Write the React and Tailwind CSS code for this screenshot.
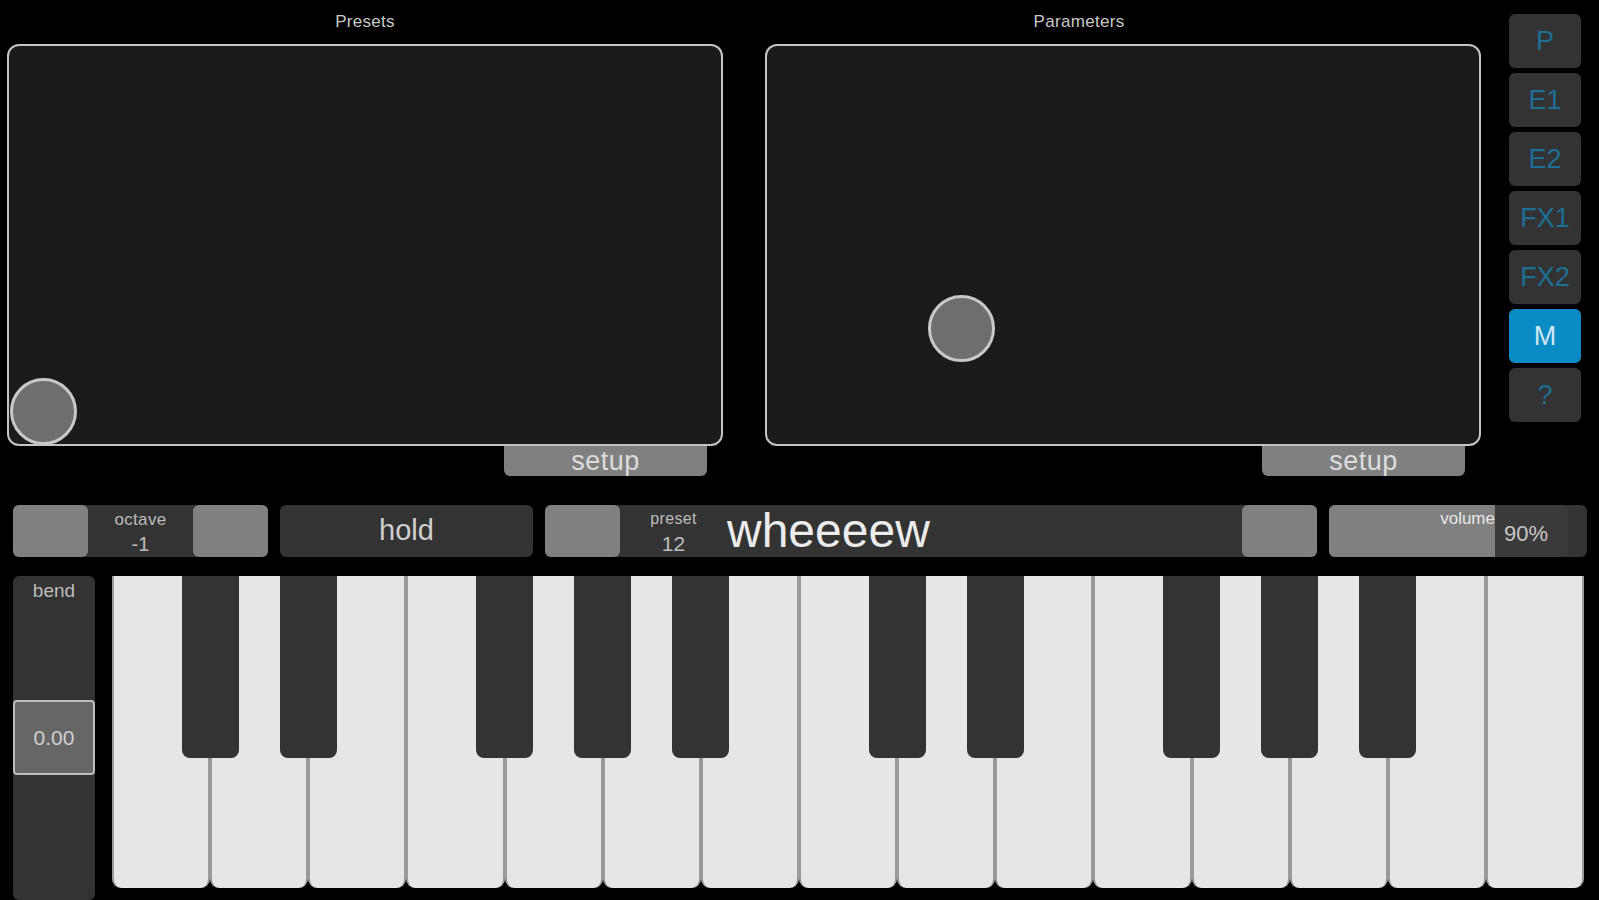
import React from "react";

const font = { fontFamily: '"Liberation Sans", Arial, sans-serif' };

function Pad({ title, knob, titleShift }) {
  return (
    <div className="flex w-[716px] flex-col">
      <div
        className={
          titleShift
            ? "flex h-[44px] items-center justify-center pr-[88px] text-[17px] tracking-[0.3px] text-[#c8c8c8]"
            : "flex h-[44px] items-center justify-center text-[17px] tracking-[0.3px] text-[#c8c8c8]"
        }
      >
        {title}
      </div>
      <div className="relative h-[402px] rounded-[12px] border-2 border-[#c4c4c4] bg-[#1b1b1b]">
        <div
          className="absolute h-[67px] w-[67px] rounded-full border-[3px] border-[#c8c8c8] bg-[#6e6e6e]"
          style={{ left: knob[0], top: knob[1] }}
        />
      </div>
      <div className="flex justify-end pr-[16px]">
        <div className="flex h-[30px] w-[203px] items-center justify-center rounded-b-[6px] bg-[#808080] text-[27px] leading-none tracking-[0.5px] text-[#dcdcdc]">
          setup
        </div>
      </div>
    </div>
  );
}

function SideButton({ label, active }) {
  return (
    <div
      className={
        active
          ? "flex h-[54px] w-[72px] items-center justify-center rounded-[6px] bg-[#0a8bc4] text-[27px] text-[#cfe6f2]"
          : "flex h-[54px] w-[72px] items-center justify-center rounded-[6px] bg-[#333333] text-[27px] text-[#1d6f96]"
      }
    >
      {label}
    </div>
  );
}

function GrayBtn() {
  return <div className="h-full w-[75px] shrink-0 rounded-[6px] bg-[#808080]" />;
}

const BLACK_AT = [1, 2, 4, 5, 6, 8, 9, 11, 12, 13];

function Keyboard() {
  return (
    <div className="relative flex h-[312px] w-[1472px]">
      {Array.from({ length: 15 }).map((_, i) => (
        <div
          key={i}
          className="h-full flex-1 rounded-b-[9px] border-x-2 border-[#9a9a9a] bg-[#e6e6e6]"
        />
      ))}
      {BLACK_AT.map((b) => (
        <div
          key={b}
          className="absolute top-0 h-[182px] w-[57px] rounded-b-[8px] bg-[#333333]"
          style={{ left: `calc(${(b * 100) / 15}% - 28.5px)` }}
        />
      ))}
    </div>
  );
}

export default function App() {
  return (
    <div className="h-[900px] w-[1599px] overflow-hidden bg-black" style={font}>
      <div className="flex h-[505px] pl-[7px]">
        <Pad title="Presets" knob={[1, 332]} />
        <div className="w-[42px]" />
        <Pad title="Parameters" knob={[161, 249]} titleShift />
        <div className="flex flex-col gap-[5px] pl-[28px] pt-[14px]">
          <SideButton label="P" />
          <SideButton label="E1" />
          <SideButton label="E2" />
          <SideButton label="FX1" />
          <SideButton label="FX2" />
          <SideButton label="M" active />
          <SideButton label="?" />
        </div>
      </div>

      <div className="flex h-[52px] gap-[12px] pl-[13px]">
        <div className="flex w-[255px] rounded-[6px] bg-[#333333]">
          <GrayBtn />
          <div className="flex flex-1 flex-col items-center justify-center pt-[3px] leading-none text-[#bdbdbd]">
            <span className="text-[17px] tracking-[0.3px]">octave</span>
            <span className="mt-[6px] text-[20px]">-1</span>
          </div>
          <GrayBtn />
        </div>
        <div className="flex w-[253px] items-center justify-center rounded-[6px] bg-[#333333] text-[29px] text-[#cfcfcf]">
          hold
        </div>
        <div className="flex w-[772px] items-center rounded-[6px] bg-[#333333]">
          <GrayBtn />
          <div className="flex w-[107px] flex-col items-center justify-center pt-[3px] leading-none text-[#bdbdbd]">
            <span className="text-[16px] tracking-[0.3px]">preset</span>
            <span className="mt-[6px] text-[21px]">12</span>
          </div>
          <div className="flex-1 text-[48px] leading-none text-[#ececec]">wheeeew</div>
          <GrayBtn />
        </div>
        <div className="flex w-[258px] rounded-[6px] bg-[#333333] pr-[19px]">
          <div className="flex flex-1 rounded-[6px] bg-[#3a3a3a]">
            <div className="flex w-[166px] justify-end rounded-l-[6px] bg-[#808080] pt-[5px] text-[17px] leading-none text-[#e8e8e8]">
              volume
            </div>
            <div className="flex flex-1 items-center pl-[9px] pt-[4px] text-[22px] text-[#c8c8c8]">
              90%
            </div>
          </div>
        </div>
      </div>

      <div className="flex gap-[17px] pl-[13px] pt-[19px]">
        <div className="flex h-[324px] w-[82px] flex-col rounded-[6px] bg-[#333333]">
          <div className="pt-[5px] text-center text-[19px] leading-none text-[#bdbdbd]">bend</div>
          <div className="mt-[100px] flex h-[75px] items-center justify-center rounded-[4px] border-2 border-[#bdbdbd] bg-[#666666] text-[21px] text-[#cfcfcf]">
            0.00
          </div>
        </div>
        <Keyboard />
      </div>
    </div>
  );
}
